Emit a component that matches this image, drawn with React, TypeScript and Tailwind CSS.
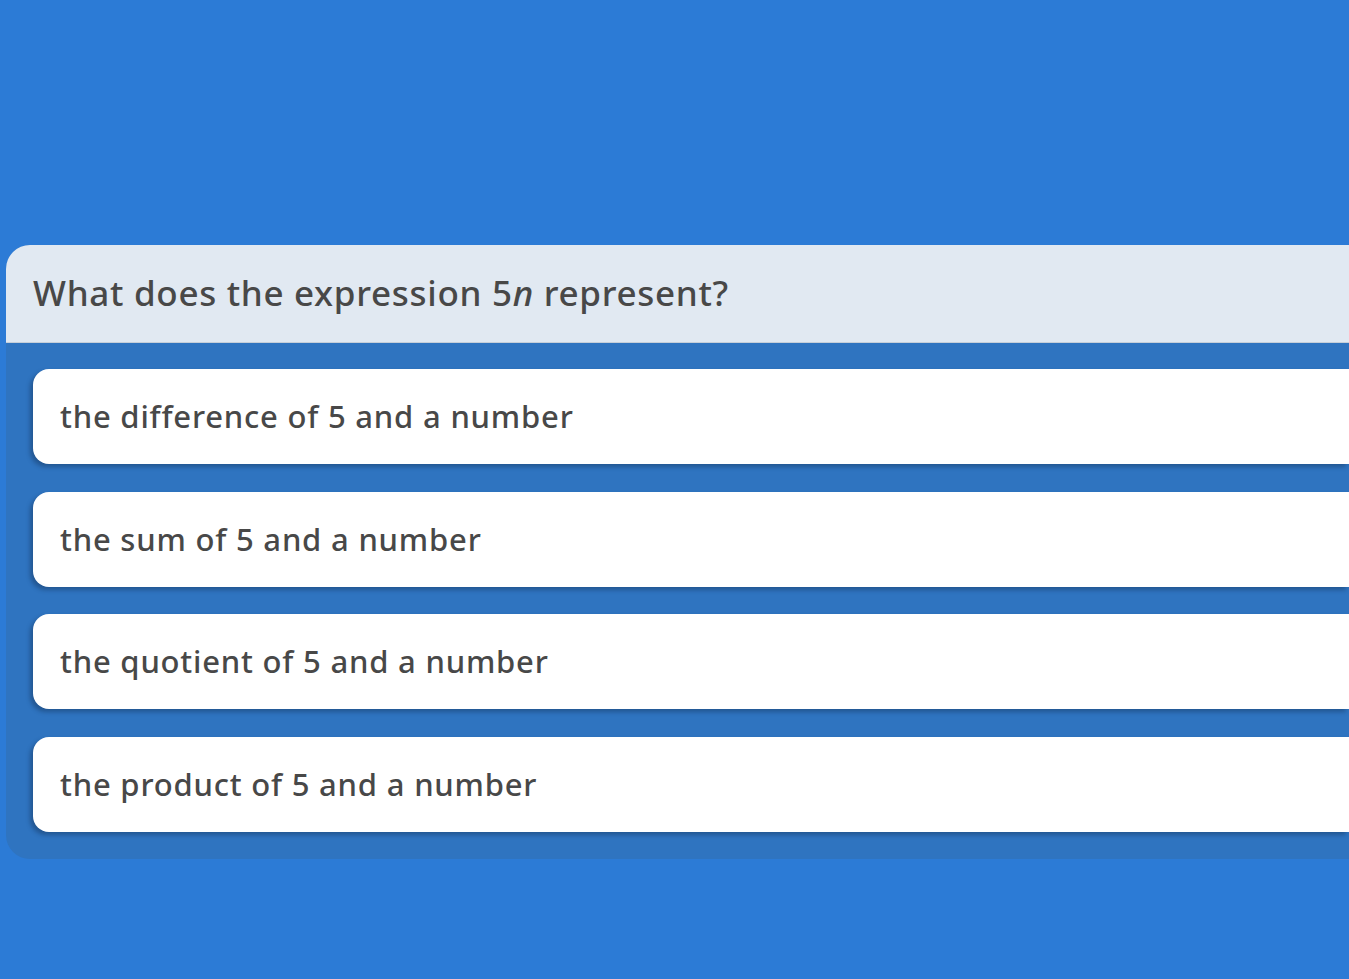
import React from 'react';

const options = [
    'the difference of 5 and a number',
    'the sum of 5 and a number',
    'the quotient of 5 and a number',
    'the product of 5 and a number',
];

const App: React.FC = () => {
    return (
        <div
            className="min-h-[979px] w-full bg-[#2c7bd6] pt-[245px] pl-[6px] overflow-hidden"
            style={{ fontFamily: '"Noto Sans", "Open Sans", sans-serif' }}
        >
            <div className="rounded-l-[24px] bg-[#2f74c0] overflow-hidden">
                {/* Question header */}
                <div className="h-[98px] bg-[#e1e9f2] border-b border-[#c6cfd9] flex items-center pl-[27px]">
                    <h1 className="text-[35px] font-medium text-[#484848] tracking-[0.7px]">
                        What does the expression 5<i>n</i> represent?
                    </h1>
                </div>

                {/* Answer options */}
                <div className="flex flex-col gap-[27.5px] pl-[27px] pt-[26px] pb-[27px]">
                    {options.map(label => (
                        <div
                            key={label}
                            className="h-[95px] bg-white rounded-l-[16px] flex items-center pl-[27px] shadow-[-3px_3px_4px_rgba(20,50,90,0.45)]"
                        >
                            <span className="text-[31px] font-medium text-[#484848] tracking-[0.8px]">{label}</span>
                        </div>
                    ))}
                </div>
            </div>
        </div>
    );
};

export default App;
